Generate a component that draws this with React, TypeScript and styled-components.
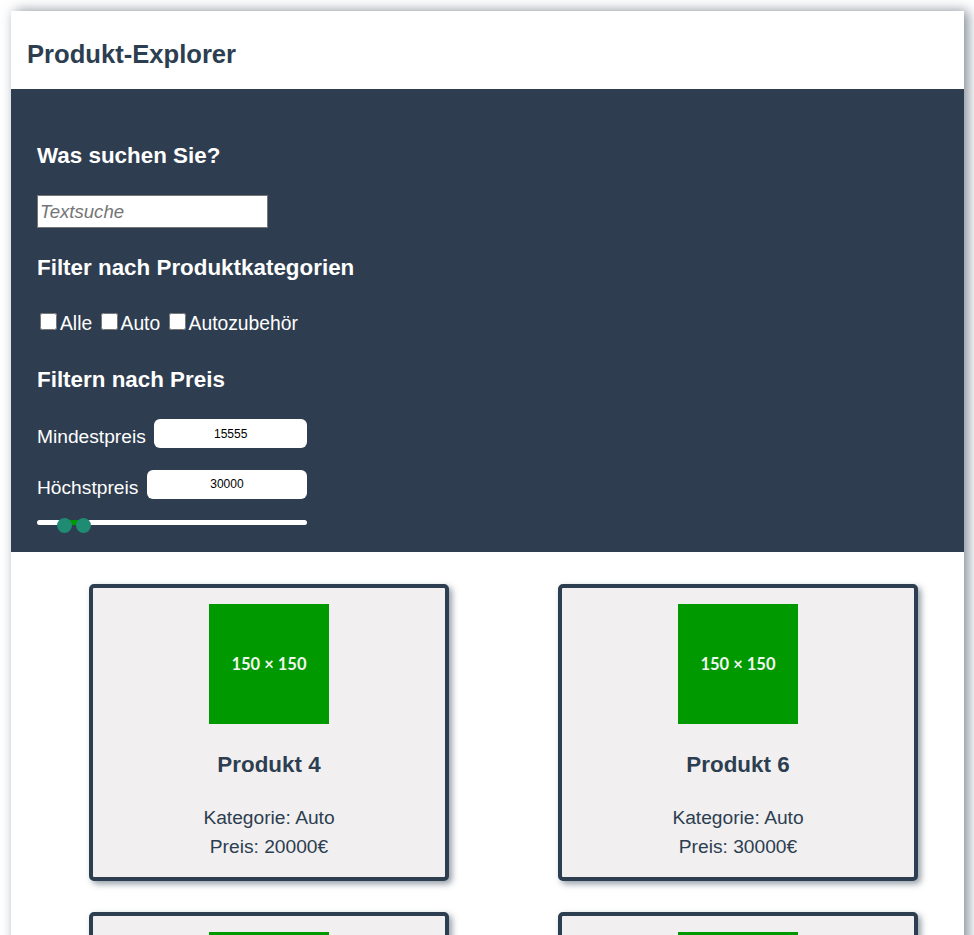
import React from "react";
import styled, { createGlobalStyle } from "styled-components";

const GlobalStyle = createGlobalStyle`
  html, body {
    margin: 0;
    padding: 0;
    background: #ffffff;
  }
  body {
    font-family: "Liberation Sans", Arial, sans-serif;
    color: #2c3e50;
  }
  * { box-sizing: border-box; }
`;

const Page = styled.div`
  margin: 11px 10px 0 11px;
  background: #ffffff;
  box-shadow: 4px 0 12px rgba(44, 62, 80, 0.6);
`;

const Header = styled.header`
  height: 78px;
  padding: 28.5px 16px 0;
  background: #ffffff;
`;

const Title = styled.h1`
  margin: 0;
  font-size: 25.6px;
  line-height: 29px;
  font-weight: 700;
  color: #2c3e50;
`;

const Filters = styled.section`
  background: #2e3d50;
  color: #ffffff;
  padding: 53.5px 26px 19.5px;
`;

const FilterHeading = styled.h2<{ $top?: number }>`
  margin: ${(p) => p.$top ?? 0}px 0 0;
  font-size: 22.4px;
  line-height: 26px;
  font-weight: 700;
  color: #ffffff;
`;

const SearchInput = styled.input`
  display: block;
  margin-top: 26.5px;
  width: 231px;
  height: 33px;
  padding: 0 2px;
  border: 1px solid #767676;
  background: #ffffff;
  font-family: "Liberation Sans", Arial, sans-serif;
  font-size: 18.6px;
  font-style: italic;
  color: #222;
  outline: none;
  &::placeholder {
    color: #757575;
    font-style: italic;
  }
`;

const CheckRow = styled.div`
  margin-top: 29px;
  font-size: 19.3px;
  line-height: 22px;
`;

const CheckLabel = styled.label`
  color: #ffffff;
`;

const Check = styled.input`
  width: 17px;
  height: 17px;
  margin: 3px 3px 0 3px;
  vertical-align: baseline;
`;

const PriceRow = styled.div<{ $top: number }>`
  display: flex;
  align-items: flex-end;
  gap: 8.5px;
  width: 270px;
  margin-top: ${(p) => p.$top}px;
`;

const PriceLabel = styled.label`
  font-size: 19.2px;
  line-height: 22px;
  color: #ffffff;
  white-space: nowrap;
`;

const PriceInput = styled.input`
  flex: 1;
  min-width: 0;
  height: 29px;
  border: none;
  border-radius: 6px;
  background: #ffffff;
  text-align: center;
  font-family: "Liberation Sans", Arial, sans-serif;
  font-size: 12px;
  color: #000000;
  outline: none;
`;

const Slider = styled.div`
  position: relative;
  width: 270px;
  height: 15px;
  margin-top: 18.5px;
`;

const Track = styled.div`
  position: absolute;
  left: 0;
  right: 0;
  top: 3px;
  height: 5px;
  border-radius: 3px;
  background: #ffffff;
`;

const Range = styled.div`
  position: absolute;
  top: 3px;
  height: 5px;
  background: #009900;
`;

const Thumb = styled.div`
  position: absolute;
  top: 0.5px;
  width: 15px;
  height: 15px;
  border-radius: 50%;
  background: #1f8b73;
`;

const Products = styled.main`
  display: grid;
  grid-template-columns: repeat(2, 360px);
  column-gap: 109px;
  row-gap: 31px;
  padding: 32px 0 40px 78px;
`;

const Card = styled.article`
  display: flex;
  flex-direction: column;
  align-items: center;
  width: 360px;
  padding: 16px 16px 15.2px;
  border: 4px solid #2c3e50;
  border-radius: 5px;
  background: #f1eff0;
  box-shadow: 3px 3px 6px rgba(44, 62, 80, 0.5);
  text-align: center;
`;

const ImagePlaceholder = styled.div`
  display: flex;
  align-items: center;
  justify-content: center;
  width: 120px;
  height: 120px;
  background: #009900;
  color: #f2f7f2;
  font-family: Lato, "Liberation Sans", sans-serif;
  font-weight: 700;
  font-size: 16.5px;
`;

const CardTitle = styled.h3`
  margin: 28px 0 0;
  font-size: 22.4px;
  line-height: 26px;
  font-weight: 700;
  color: #2c3e50;
`;

const CardText = styled.p`
  margin: 26.3px 0 0;
  font-size: 19.2px;
  line-height: 28.8px;
  color: #2c3e50;
`;

type Product = { name: string; category: string; price: number };

const products: Product[] = [
  { name: "Produkt 4", category: "Auto", price: 20000 },
  { name: "Produkt 6", category: "Auto", price: 30000 },
  { name: "Produkt 7", category: "Auto", price: 25000 },
  { name: "Produkt 8", category: "Auto", price: 28000 },
];

const categories = ["Alle", "Auto", "Autozubehör"];

const SLIDER_WIDTH = 270;
const THUMB = 15;
const RANGE_MAX = 195000;
const minPrice = 15555;
const maxPrice = 30000;

const pos = (v: number) => (v / RANGE_MAX) * (SLIDER_WIDTH - THUMB);

export default function App() {
  const minLeft = pos(minPrice);
  const maxLeft = pos(maxPrice);
  return (
    <>
      <GlobalStyle />
      <Page>
        <Header>
          <Title>Produkt-Explorer</Title>
        </Header>
        <Filters>
          <FilterHeading>Was suchen Sie?</FilterHeading>
          <SearchInput type="text" placeholder="Textsuche" />
          <FilterHeading $top={27}>Filter nach Produktkategorien</FilterHeading>
          <CheckRow>
            {categories.map((c, i) => (
              <React.Fragment key={c}>
                {i > 0 && " "}
                <CheckLabel>
                  <Check type="checkbox" />
                  {c}
                </CheckLabel>
              </React.Fragment>
            ))}
          </CheckRow>
          <FilterHeading $top={32}>Filtern nach Preis</FilterHeading>
          <PriceRow $top={26}>
            <PriceLabel>Mindestpreis</PriceLabel>
            <PriceInput type="text" defaultValue={String(minPrice)} />
          </PriceRow>
          <PriceRow $top={21.7}>
            <PriceLabel>Höchstpreis</PriceLabel>
            <PriceInput type="text" defaultValue={String(maxPrice)} />
          </PriceRow>
          <Slider>
            <Track />
            <Range style={{ left: minLeft + THUMB / 2, width: maxLeft - minLeft }} />
            <Thumb style={{ left: minLeft }} />
            <Thumb style={{ left: maxLeft }} />
          </Slider>
        </Filters>
        <Products>
          {products.map((p) => (
            <Card key={p.name}>
              <ImagePlaceholder>150 × 150</ImagePlaceholder>
              <CardTitle>{p.name}</CardTitle>
              <CardText>
                Kategorie: {p.category}
                <br />
                Preis: {p.price}€
              </CardText>
            </Card>
          ))}
        </Products>
      </Page>
    </>
  );
}
